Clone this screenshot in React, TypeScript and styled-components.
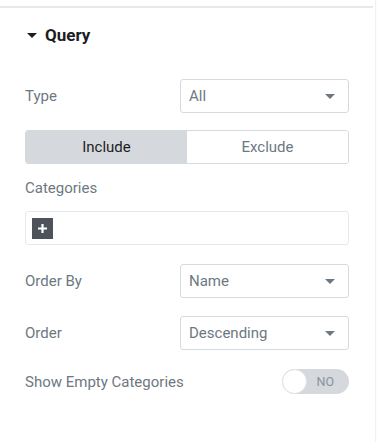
import * as React from 'react'
import styled, { createGlobalStyle } from 'styled-components'

const GlobalStyle = createGlobalStyle`
  html, body {
    margin: 0;
    padding: 0;
    background: #ffffff;
  }
  * {
    box-sizing: border-box;
  }
`

const Page = styled.div`
  width: 378px;
  height: 442px;
  display: flex;
  font-family: Roboto, 'Liberation Sans', sans-serif;
  overflow: hidden;
`

const Panel = styled.div`
  width: 375px;
  padding-top: 6px;
  display: flex;
  flex-direction: column;
`

const Edge = styled.div`
  flex: 1;
  background: #fdfdfd;
  border-left: 1px solid #f1f1f1;
`

const Section = styled.section`
  border-top: 2px solid #e8e8e8;
  margin-right: 2px;
  padding: 15px 24px 0 25px;
  display: flex;
  flex-direction: column;
`

const Heading = styled.h2`
  margin: 0 0 0 2px;
  display: flex;
  align-items: center;
  gap: 8px;
  font-size: 17px;
  font-weight: 700;
  color: #1d1d1f;
  height: 24px;
`

const Caret = styled.span`
  width: 0;
  height: 0;
  border-left: 5px solid transparent;
  border-right: 5px solid transparent;
  border-top: 5px solid #1d1d1f;
`

const Row = styled.div<{ $mt: number }>`
  margin-top: ${({ $mt }) => $mt}px;
  display: flex;
  align-items: center;
  justify-content: space-between;
`

const Label = styled.span`
  font-size: 15px;
  color: #6d7882;
`

const SelectBox = styled.div`
  width: 169px;
  height: 34px;
  border: 1px solid #d5dadf;
  border-radius: 3px;
  padding: 0 13px 0 8px;
  display: flex;
  align-items: center;
  justify-content: space-between;
  font-size: 15px;
  color: #6d7882;
`

const SelectCaret = styled.span`
  width: 0;
  height: 0;
  border-left: 5px solid transparent;
  border-right: 5px solid transparent;
  border-top: 5px solid #6d7882;
`

const Switcher = styled.div`
  margin-top: 17px;
  height: 34px;
  display: flex;
  border: 1px solid #d5dadf;
  border-radius: 3px;
  overflow: hidden;
`

const SwitchOption = styled.div<{ $active?: boolean }>`
  flex: 1;
  display: flex;
  align-items: center;
  justify-content: center;
  font-size: 15px;
  background: ${({ $active }) => ($active ? '#d5d8dc' : '#ffffff')};
  color: ${({ $active }) => ($active ? '#1d1d1f' : '#6d7882')};
`

const FieldLabel = styled(Label)`
  margin-top: 16px;
  line-height: 17px;
`

const TagBox = styled.div`
  margin-top: 14px;
  height: 34px;
  border: 1px solid #e6e9ec;
  border-radius: 3px;
  padding: 0 6px;
  display: flex;
  align-items: center;
`

const AddButton = styled.div`
  width: 21px;
  height: 21px;
  background: #4e535a;
  display: flex;
  align-items: center;
  justify-content: center;
`

const Toggle = styled.div`
  position: relative;
  width: 67px;
  height: 25px;
  border-radius: 13px;
  background: #d5d8dc;
  display: flex;
  align-items: center;
  justify-content: flex-end;
  padding-right: 15px;
  font-size: 12.5px;
  color: #8a939b;
`

const Knob = styled.span`
  position: absolute;
  left: 0;
  top: 0;
  width: 25px;
  height: 25px;
  border-radius: 50%;
  background: #ffffff;
  border: 1px solid #e0e3e6;
`

const Select = ({ value }: { value: string }) => (
  <SelectBox>
    <span>{value}</span>
    <SelectCaret />
  </SelectBox>
)

export default function App() {
  return (
    <Page>
      <GlobalStyle />
      <Panel>
        <Section>
          <Heading>
            <Caret />
            Query
          </Heading>
          <Row $mt={32}>
            <Label>Type</Label>
            <Select value="All" />
          </Row>
          <Switcher>
            <SwitchOption $active>Include</SwitchOption>
            <SwitchOption>Exclude</SwitchOption>
          </Switcher>
          <FieldLabel>Categories</FieldLabel>
          <TagBox>
            <AddButton>
              <svg width="11" height="11" viewBox="0 0 11 11">
                <path d="M5.5 1v9M1 5.5h9" stroke="#fff" strokeWidth="2.2" />
              </svg>
            </AddButton>
          </TagBox>
          <Row $mt={19}>
            <Label>Order By</Label>
            <Select value="Name" />
          </Row>
          <Row $mt={18}>
            <Label>Order</Label>
            <Select value="Descending" />
          </Row>
          <Row $mt={19}>
            <Label>Show Empty Categories</Label>
            <Toggle>
              <Knob />
              NO
            </Toggle>
          </Row>
        </Section>
      </Panel>
      <Edge />
    </Page>
  )
}
